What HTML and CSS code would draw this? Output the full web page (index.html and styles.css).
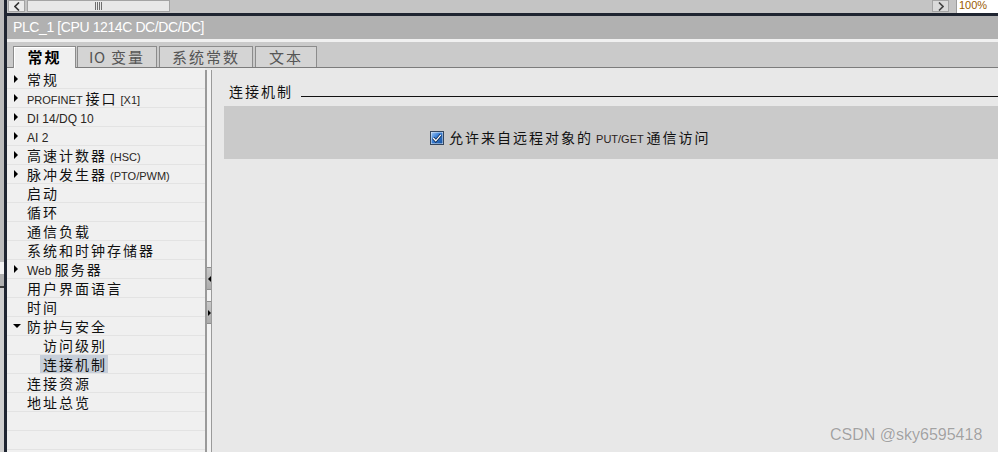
FILE: index.html
```html
<!DOCTYPE html>
<html lang="zh-CN">
<head>
<meta charset="utf-8">
<title>PLC_1 属性</title>
<link rel="stylesheet" href="styles.css">
</head>
<body>
<div class="screen">
  <div class="edge">
    <div class="edge-bg">
      <div class="eb eb1"></div>
      <div class="eb eb2"></div>
      <div class="eb eb3"></div>
      <div class="eb eb4"></div>
    </div>
    <div class="edge-dark"></div>
  </div>
  <div class="main">
    <div class="hscroll">
      <div class="sbtn"><svg width="6" height="9" viewBox="0 0 6 9"><path d="M5 0.5 L1 4.5 L5 8.5" fill="none" stroke="#333" stroke-width="1.6"/></svg></div>
      <div class="thumb"><span class="grip"></span></div>
      <div class="track"></div>
      <div class="sbtn rbtn"><svg width="6" height="9" viewBox="0 0 6 9"><path d="M1 0.5 L5 4.5 L1 8.5" fill="none" stroke="#444" stroke-width="1.6"/></svg></div>
      <div class="zoom"><span>100%</span></div>
    </div>
    <div class="title">PLC_1 [CPU 1214C DC/DC/DC]</div>
    <div class="tabs">
      <div class="tab active t1">常规</div>
      <div class="tab t2"><span class="tab-en">IO</span> 变量</div>
      <div class="tab t3">系统常数</div>
      <div class="tab t4">文本</div>
    </div>
    <div class="body">
      <nav class="tree">
        <div class="row"><span class="arr r"></span><span class="txt">常规</span></div>
        <div class="row"><span class="arr r"></span><span class="txt"><span class="en">PROFINET </span>接口<span class="en"> [X1]</span></span></div>
        <div class="row"><span class="arr r"></span><span class="txt"><span class="en en12">DI 14/DQ 10</span></span></div>
        <div class="row"><span class="arr r"></span><span class="txt"><span class="en en12">AI 2</span></span></div>
        <div class="row"><span class="arr r"></span><span class="txt">高速计数器<span class="en"> (HSC)</span></span></div>
        <div class="row"><span class="arr r"></span><span class="txt">脉冲发生器<span class="en"> (PTO/PWM)</span></span></div>
        <div class="row"><span class="arr"></span><span class="txt">启动</span></div>
        <div class="row"><span class="arr"></span><span class="txt">循环</span></div>
        <div class="row"><span class="arr"></span><span class="txt">通信负载</span></div>
        <div class="row"><span class="arr"></span><span class="txt">系统和时钟存储器</span></div>
        <div class="row"><span class="arr r"></span><span class="txt"><span class="en en12">Web </span>服务器</span></div>
        <div class="row"><span class="arr"></span><span class="txt">用户界面语言</span></div>
        <div class="row"><span class="arr"></span><span class="txt">时间</span></div>
        <div class="row"><span class="arr d"></span><span class="txt">防护与安全</span></div>
        <div class="row sub"><span class="arr"></span><span class="txt">访问级别</span></div>
        <div class="row sub"><span class="arr"></span><span class="txt sel">连接机制</span></div>
        <div class="row"><span class="arr"></span><span class="txt">连接资源</span></div>
        <div class="row"><span class="arr"></span><span class="txt">地址总览</span></div>
        <div class="row"></div>
        <div class="row"></div>
        <div class="row"></div>
      </nav>
      <div class="splitter">
        <div class="sp-btn"><span class="tri-l"></span></div>
        <div class="sp-btn"><span class="tri-r"></span></div>
      </div>
      <section class="content">
        <div class="sec-head">
          <div class="sec-title">连接机制</div>
          <div class="rule"></div>
        </div>
        <div class="box">
          <label class="chk">
            <svg class="cb" width="14" height="14" viewBox="0 0 14 14">
              <defs>
                <linearGradient id="cbg" x1="0" y1="0" x2="1" y2="1">
                  <stop offset="0" stop-color="#9cc4f0"/>
                  <stop offset="0.4" stop-color="#3d82d8"/>
                  <stop offset="1" stop-color="#14509e"/>
                </linearGradient>
              </defs>
              <rect x="0.5" y="0.5" width="13" height="13" fill="#dfe9f5" stroke="#34465e"/>
              <rect x="1.5" y="1.5" width="11" height="11" fill="url(#cbg)"/>
              <path d="M3.2 7 L5.8 9.8 L10.8 3.8" fill="none" stroke="#0a2348" stroke-width="2.8"/>
              <path d="M3.2 7 L5.8 9.8 L10.8 3.8" fill="none" stroke="#ffffff" stroke-width="1.3"/>
            </svg>
            <span class="lbl">允许来自远程对象的<span class="en lbl-en"> PUT/GET </span>通信访问</span>
          </label>
        </div>
      </section>
    </div>
  </div>
  <div class="watermark">CSDN @sky6595418</div>
</div>
</body>
</html>
```

FILE: styles.css
```css
* { box-sizing: border-box; margin: 0; padding: 0; }

html, body {
  width: 998px;
  height: 452px;
  overflow: hidden;
}

body {
  background: #e8e8e8;
  font-family: "Noto Sans CJK SC", "Liberation Sans", sans-serif;
  color: #111;
}

.screen {
  position: relative;
  display: flex;
  width: 998px;
  height: 452px;
}

/* left window edge */
.edge { width: 7px; display: flex; flex: none; }
.edge-bg {
  width: 4px;
  background: #c4c4c4;
  display: flex;
  flex-direction: column;
}
.eb { width: 4px; }
.eb1 { height: 262px; background: #bcbcbc; }
.eb2 { height: 12px; background: #f2f2f2; }
.eb3 { height: 14px; background: #b0b0b0; border-bottom: 2px solid #3a3a3a; }
.eb4 { flex: 1; background: #cfcfcf; }
.edge-dark { width: 3px; background: #1f2531; }

.main {
  flex: 1;
  display: flex;
  flex-direction: column;
  min-width: 0;
}

/* top horizontal scrollbar */
.hscroll {
  height: 16px;
  flex: none;
  background: #c4c4c4;
  border-bottom: 3px solid #1f2531;
  display: flex;
  align-items: flex-start;
  padding-left: 1px;
}
.sbtn {
  width: 17px;
  height: 12px;
  background: #ececec;
  border: 1px solid #a4a4a4;
  display: flex;
  align-items: center;
  justify-content: center;
}
.rbtn { background: #dadada; }
.thumb {
  width: 143px;
  height: 12px;
  margin-left: 2px;
  background: #e8e8e8;
  border: 1px solid #a4a4a4;
  display: flex;
  align-items: center;
  justify-content: center;
}
.grip {
  width: 7px;
  height: 8px;
  background: repeating-linear-gradient(to right, #6e6e6e 0 1px, transparent 1px 2px);
}
.track { flex: 1; }
.zoom {
  width: 42px;
  height: 13px;
  margin-left: 7px;
  background: #fff;
  border-left: 1px solid #9c9c9c;
  overflow: hidden;
  font: 11px/13px "Liberation Sans", sans-serif;
  color: #9a5a00;
  padding-left: 2px;
}
.zoom span { display: block; margin-top: -1px; }

/* title bar */
.title {
  height: 26px;
  flex: none;
  background: #b1b1b1;
  border-bottom: 3px solid #f0f0f0;
  color: #fff;
  font: 14px/23px "Liberation Sans", sans-serif;
  letter-spacing: -0.4px;
  padding-left: 6px;
}

/* tabs */
.tabs {
  height: 26px;
  flex: none;
  background: #cacaca;
  border-bottom: 1px solid #7c7c7c;
  display: flex;
  align-items: flex-end;
  padding-left: 6px;
}
.tab {
  height: 21px;
  border: 1px solid #8c8c8c;
  border-bottom: none;
  background: #d4d4d4;
  color: #555;
  font-size: 15px;
  line-height: 20px;
  letter-spacing: 2px;
  text-align: center;
  white-space: nowrap;
}
.tab.active {
  height: 22px;
  margin-bottom: -1px;
  background: #f0f0f0;
  color: #000;
  font-weight: bold;
  box-shadow: inset 1px 1px 0 #fff;
}
.tab-en { letter-spacing: 0.5px; }
.t1 { width: 63px; margin-right: 1px; }
.t2 { width: 80px; margin-right: 2px; }
.t3 { width: 94px; margin-right: 2px; }
.t4 { width: 62px; }

/* body */
.body {
  flex: 1;
  display: flex;
  min-height: 0;
}

.tree {
  width: 198px;
  flex: none;
  background: #f0f0f0;
  padding-top: 2px;
  overflow: hidden;
}
.row {
  height: 19px;
  border-bottom: 1px solid #e3e3e3;
  display: flex;
  align-items: center;
  padding-left: 7px;
  font-size: 14px;
  letter-spacing: 2px;
  white-space: nowrap;
  color: #111;
}
.row.sub { padding-left: 23px; }
.txt { line-height: 18px; height: 18px; margin-top: -1px; }
.arr {
  width: 13px;
  flex: none;
  display: flex;
  align-items: center;
}
.arr.r::before {
  content: "";
  border-left: 4px solid #000;
  border-top: 4px solid transparent;
  border-bottom: 4px solid transparent;
}
.arr.d::before {
  content: "";
  margin-left: -1px;
  border-top: 4px solid #000;
  border-left: 4px solid transparent;
  border-right: 4px solid transparent;
}
.en {
  font-family: "Liberation Sans", sans-serif;
  font-size: 11px;
  letter-spacing: 0;
  color: #2a2622;
  white-space: pre;
}
.en12 { font-size: 12px; }
.sel {
  background: #c6ced9;
  padding: 0 1px 0 3px;
  margin-left: -3px;
}

/* splitter */
.splitter {
  width: 7px;
  flex: none;
  margin-top: 2px;
  border-left: 2px solid #9a9a9a;
  border-right: 1px solid #9a9a9a;
  background: #f3f3f3;
  padding-top: 197px;
  display: flex;
  flex-direction: column;
  gap: 11px;
}
.sp-btn {
  height: 23px;
  background: linear-gradient(#c8c8c8, #acacac);
  border-top: 1px solid #8e8e8e;
  border-bottom: 1px solid #8e8e8e;
  display: flex;
  align-items: center;
  padding-left: 1px;
}
.tri-l {
  border-right: 3px solid #000;
  border-top: 3px solid transparent;
  border-bottom: 3px solid transparent;
}
.tri-r {
  border-left: 3px solid #000;
  border-top: 3px solid transparent;
  border-bottom: 3px solid transparent;
}

/* content */
.content {
  flex: 1;
  background: #e8e8e8;
  padding-left: 12px;
  padding-top: 13px;
  min-width: 0;
}
.sec-head {
  display: flex;
  height: 20px;
  align-items: flex-start;
}
.sec-title {
  padding-left: 5px;
  font-size: 14px;
  line-height: 20px;
  letter-spacing: 2px;
  color: #111;
}
.rule {
  flex: 1;
  height: 16px;
  border-bottom: 1px solid #111;
  margin-left: 8px;
}
.box {
  margin-top: 5px;
  height: 53px;
  background: #cacaca;
  padding: 22px 0 0 206px;
}
.chk {
  display: flex;
  align-items: center;
  height: 20px;
}
.cb { flex: none; margin-right: 5px; }
.lbl {
  font-size: 14px;
  line-height: 20px;
  letter-spacing: 2px;
  color: #111;
  white-space: nowrap;
}
.lbl-en { font-size: 11px; color: #2a2220; }

/* watermark overlay */
.watermark {
  position: absolute;
  left: 830px;
  top: 425px;
  font: 16px/20px "Liberation Sans", sans-serif;
  color: #a2a2a2;
  text-shadow: 0 0 1px #fff;
}
```
